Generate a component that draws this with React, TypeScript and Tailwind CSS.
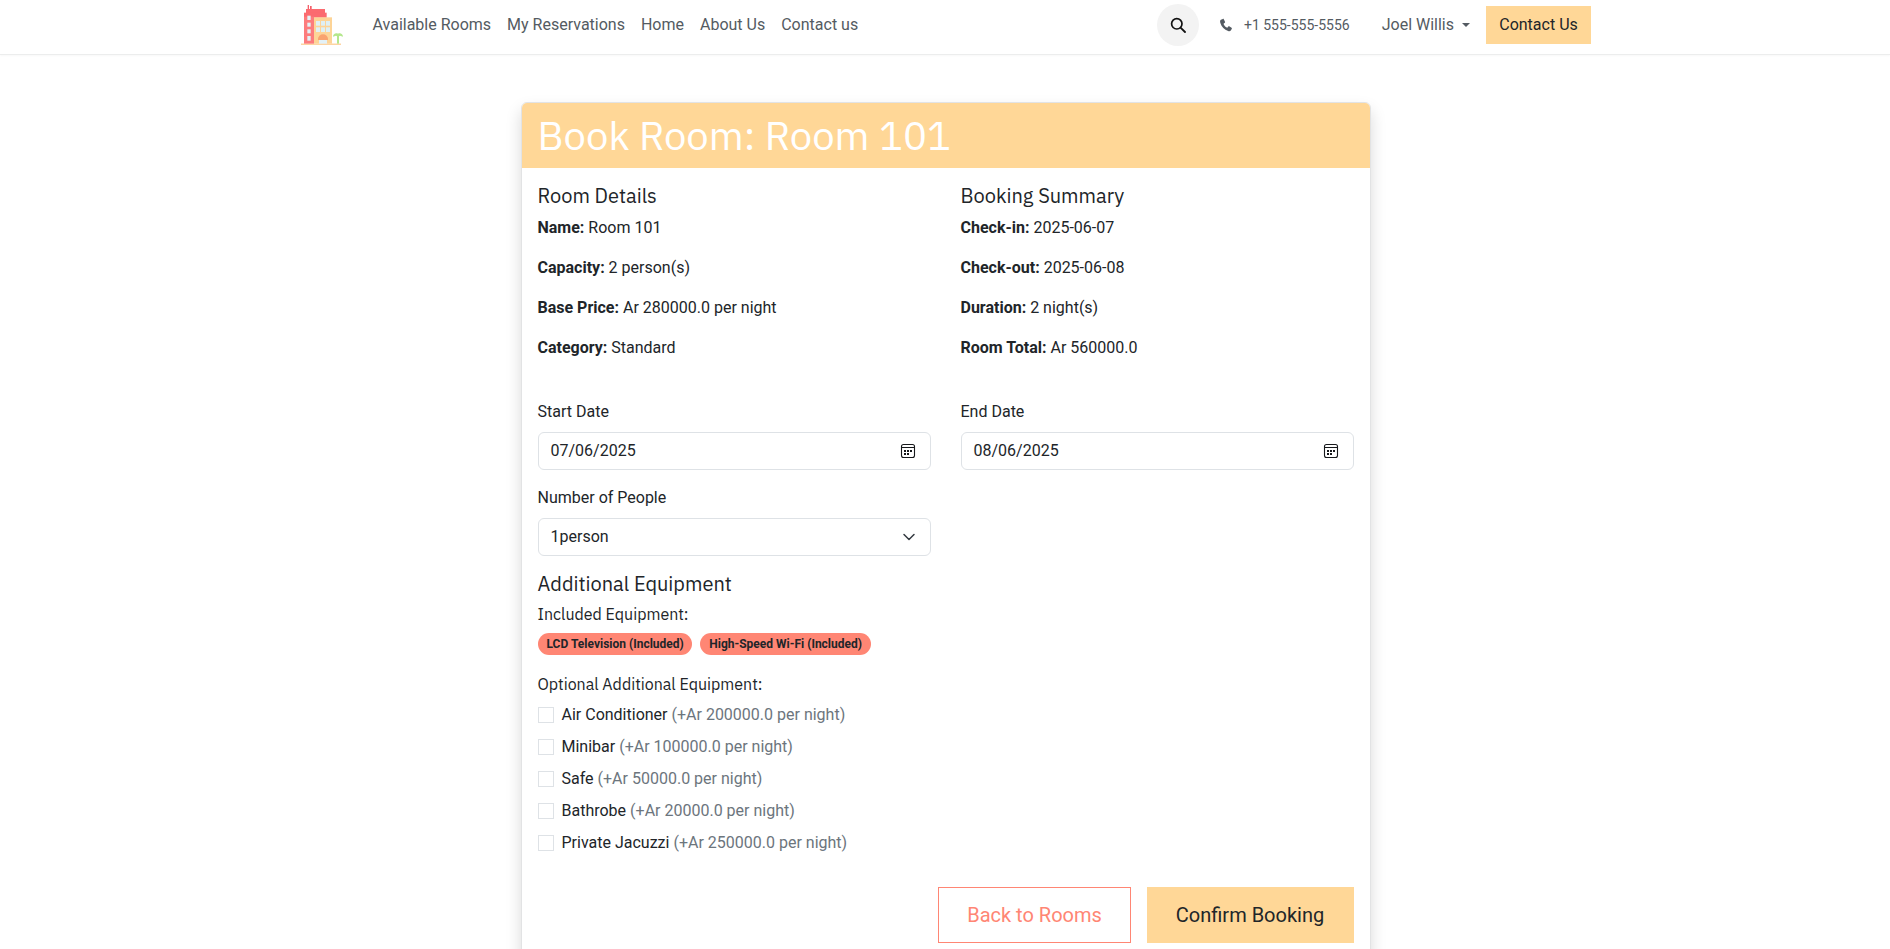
import React from "react";

const plex = "font-['IBM_Plex_Sans','Noto_Sans',sans-serif]";

function Logo() {
  return (
    <svg width="60" height="50" viewBox="0 0 180 150" className="block">
      <rect x="33" y="131" width="120" height="3" fill="#fdbf75" />
      <rect x="53" y="15" width="4" height="13" fill="#f4606a" />
      <rect x="60" y="18" width="5" height="10" fill="#f4606a" />
      <rect x="48" y="27" width="57" height="12" fill="#fb6b70" />
      <rect x="42" y="38" width="68" height="15" fill="#fb6b70" />
      <rect x="42" y="50" width="30" height="81" fill="#fc7c7d" />
      <rect x="52" y="47" width="10" height="13" fill="#e3f1f7" />
      <rect x="52" y="68" width="10" height="12" fill="#e3f1f7" />
      <rect x="52" y="88" width="10" height="12" fill="#e3f1f7" />
      <rect x="52" y="108" width="10" height="14" fill="#e3f1f7" />
      <rect x="72" y="52" width="54" height="79" fill="#fdd497" />
      <rect x="78" y="63" width="12" height="14" fill="#dff0f4" />
      <rect x="93" y="63" width="12" height="14" fill="#dff0f4" />
      <rect x="108" y="63" width="12" height="14" fill="#dff0f4" />
      <rect x="78" y="82" width="12" height="14" fill="#dff0f4" />
      <rect x="93" y="82" width="12" height="14" fill="#dff0f4" />
      <rect x="108" y="82" width="12" height="14" fill="#dff0f4" />
      <path d="M84 120v-3a15 14 0 0 1 30 0v3z" fill="#f9a36f" />
      <rect x="87" y="120" width="24" height="11" fill="#e3f1f7" />
      <rect x="141" y="104" width="6" height="27" fill="#b4e78c" />
      <path d="M129 110c0-8 8-12 15-9 7-3 15 1 15 9l-9-3-6 3-6-3z" fill="#b4e78c" />
    </svg>
  );
}

function CalendarIcon() {
  return (
    <svg width="16" height="16" viewBox="0 0 16 16" fill="none" className="block">
      <rect x="1.500" y="1.500" width="13" height="13" rx="2" stroke="#16181b" strokeWidth="1.100" />
      <path d="M1.500 4.500h13" stroke="#16181b" strokeWidth="1" />
      <path d="M4 7h2v2H4zM7 7h2v2H7zM10 7h2v2h-2zM4 10h2v2H4zM7 10h2v2H7z" fill="#16181b" />
    </svg>
  );
}

function Info({ label, value }: { label: string; value: string }) {
  return (
    <p className="mb-4 h-6 leading-6 whitespace-nowrap">
      <strong className="font-bold">{label}</strong> {value}
    </p>
  );
}

function DateField({ label, value }: { label: string; value: string }) {
  return (
    <div>
      <div className="mb-2 h-6 leading-6">{label}</div>
      <div className="flex h-[38px] items-center justify-between rounded-md border border-[#dee2e6] bg-white pl-[12px] pr-[14px]">
        <span>{value}</span>
        <CalendarIcon />
      </div>
    </div>
  );
}

function Extra({ name, price }: { name: string; price: string }) {
  return (
    <div className="flex h-6 items-center whitespace-nowrap mb-2 last:mb-0">
      <span className="mr-2 h-4 w-4 shrink-0 border border-[#dee2e6] bg-white" />
      <span>{name}</span>
      <span className="ml-1 text-[#6c757d]">{price}</span>
    </div>
  );
}

export default function App() {
  return (
    <div className="h-[949px] overflow-hidden bg-white font-['Roboto',sans-serif] text-base text-[#212529]">
      <header className="h-[55px] border-b border-[#eceded] bg-white shadow-[0_1px_2px_rgba(0,0,0,0.03)]">
        <div className="mx-auto flex h-[50px] w-[1320px] items-center pl-[5px] pr-[14px]">
          <div className="mr-[22.5px] w-[60px]">
            <Logo />
          </div>
          <nav className="flex gap-4 text-[#545b62] whitespace-nowrap">
            <span>Available Rooms</span>
            <span>My Reservations</span>
            <span>Home</span>
            <span>About Us</span>
            <span>Contact us</span>
          </nav>
          <div className="ml-auto flex items-center whitespace-nowrap">
            <div className="flex h-[42px] w-[42px] items-center justify-center rounded-full bg-[#f3f3f3]">
              <svg width="16" height="16" viewBox="0 0 16 16" fill="none">
                <circle cx="6.800" cy="6.800" r="5.200" stroke="#111" strokeWidth="1.700" />
                <path d="M10.800 10.800L15 15" stroke="#111" strokeWidth="1.800" strokeLinecap="round" />
              </svg>
            </div>
            <svg width="14" height="14" viewBox="0 0 24 24" className="ml-[20px]" fill="#545b62">
              <path d="M6.600 1.500 3.200 3.200C1.800 4 1.500 6 2.300 8.500c2 6.500 7 11.700 13.300 13.700 2.200.7 4 .2 4.900-1.200l1.500-2.700c.3-.6.100-1.300-.5-1.700l-4-2.400c-.5-.3-1.200-.2-1.600.3l-1.400 1.700c-.3.400-.8.500-1.200.2-2.300-1.300-4.100-3.400-5.300-5.900-.2-.4-.1-.9.300-1.200l1.700-1.300c.5-.4.600-1 .3-1.600L8.200 2c-.3-.6-1-.8-1.600-.5z" />
            </svg>
            <span className="ml-[11px] text-sm text-[#545b62]">+1 555-555-5556</span>
            <span className="ml-[32px] text-[#545b62]">Joel Willis</span>
            <span className="ml-[8px] h-0 w-0 border-x-[4.800px] border-t-[4.800px] border-x-transparent border-t-[#545b62]" />
            <div className="ml-[16px] flex h-[38px] w-[105px] items-center justify-center bg-[#ffd797] text-[#212529]">
              Contact Us
            </div>
          </div>
        </div>
      </header>

      <main className="ml-[520.5px] mt-[47px] w-[850px]">
        <div className="rounded-md border border-[#e2e3e4] bg-white shadow-[0_8px_16px_rgba(0,0,0,0.15)]">
          <div className={`flex h-[65px] items-center rounded-t-[5px] bg-[#ffd797] px-4 pb-[2px] text-[40px] leading-[48px] text-white ${plex}`}>
            Book Room: Room 101
          </div>
          <div className="px-4 pt-4">
            <div className="grid grid-cols-2 gap-x-[30px]">
              <div>
                <h4 className={`mb-2 h-6 text-xl leading-6 ${plex}`}>Room Details</h4>
                <Info label="Name:" value="Room 101" />
                <Info label="Capacity:" value="2 person(s)" />
                <Info label="Base Price:" value="Ar 280000.0 per night" />
                <Info label="Category:" value="Standard" />
              </div>
              <div>
                <h4 className={`mb-2 h-6 text-xl leading-6 ${plex}`}>Booking Summary</h4>
                <Info label="Check-in:" value="2025-06-07" />
                <Info label="Check-out:" value="2025-06-08" />
                <Info label="Duration:" value="2 night(s)" />
                <Info label="Room Total:" value="Ar 560000.0" />
              </div>
            </div>

            <div className="mt-[24px] grid grid-cols-2 gap-x-[30px]">
              <DateField label="Start Date" value="07/06/2025" />
              <DateField label="End Date" value="08/06/2025" />
            </div>

            <div className="mt-4 grid grid-cols-2 gap-x-[30px]">
              <div>
                <div className="mb-2 h-6 leading-6">Number of People</div>
                <div className="flex h-[38px] items-center justify-between rounded-md border border-[#dee2e6] bg-white pl-[12px] pr-[13px]">
                  <span>1person</span>
                  <svg width="16" height="16" viewBox="0 0 16 16" fill="none">
                    <path d="M3 5.500l5 5 5-5" stroke="#343a40" strokeWidth="1.500" strokeLinecap="round" strokeLinejoin="round" />
                  </svg>
                </div>
              </div>
            </div>

            <h4 className={`mt-4 h-6 text-xl leading-6 ${plex}`}>Additional Equipment</h4>
            <div className={`mt-[6px] h-6 leading-6 ${plex}`}>Included Equipment:</div>
            <div className="mt-[7px] flex gap-2 text-xs font-bold">
              <span className="flex h-[22px] items-center rounded-full bg-[#ff8674] pl-[9px] pr-[8.500px]">LCD Television (Included)</span>
              <span className="flex h-[22px] items-center rounded-full bg-[#ff8674] px-[9px]">High-Speed Wi-Fi (Included)</span>
            </div>
            <div className={`mt-[17px] h-6 leading-6 ${plex}`}>Optional Additional Equipment:</div>
            <div className="mt-[7px]">
              <Extra name="Air Conditioner" price="(+Ar 200000.0 per night)" />
              <Extra name="Minibar" price="(+Ar 100000.0 per night)" />
              <Extra name="Safe" price="(+Ar 50000.0 per night)" />
              <Extra name="Bathrobe" price="(+Ar 20000.0 per night)" />
              <Extra name="Private Jacuzzi" price="(+Ar 250000.0 per night)" />
            </div>

            <div className="mt-8 flex justify-end gap-4 pb-4 text-xl">
              <div className="flex h-[56px] w-[193px] items-center justify-center border border-[#ff8674] pl-[1px] text-[#ff8674]">Back to Rooms</div>
              <div className="flex h-[56px] w-[207px] items-center justify-center bg-[#ffd797]">Confirm Booking</div>
            </div>
          </div>
        </div>
      </main>
    </div>
  );
}
